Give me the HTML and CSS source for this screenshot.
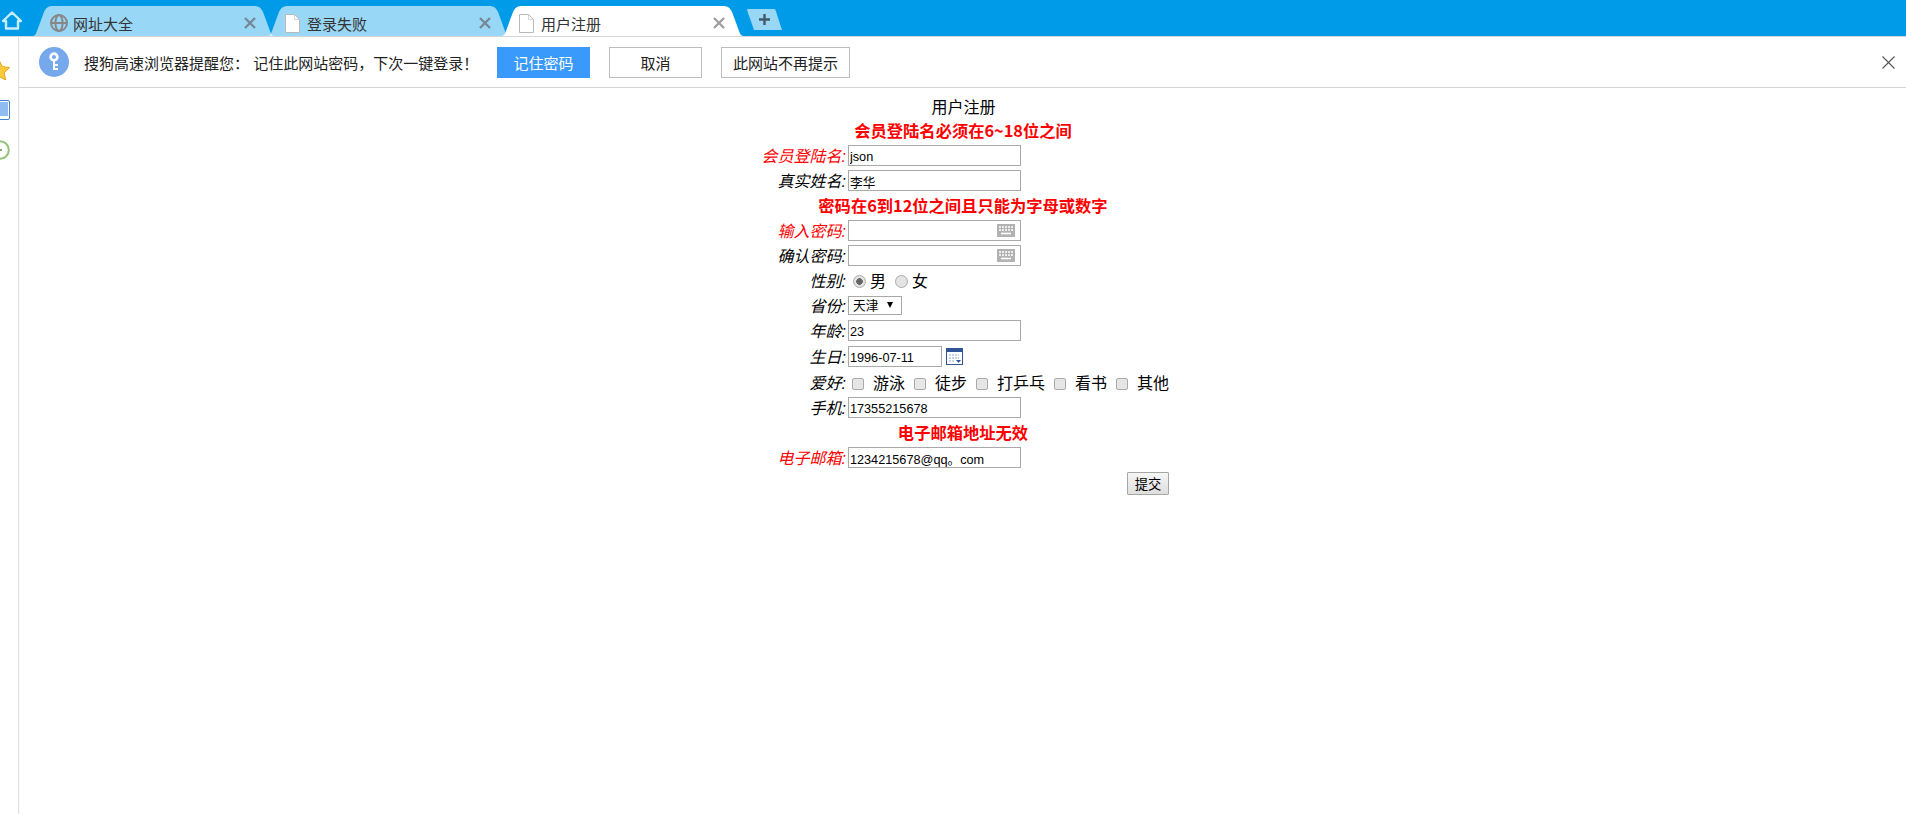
FILE: index.html
```html
<!DOCTYPE html>
<html lang="zh-CN">
<head>
  <meta charset="UTF-8" />
  <title>用户注册</title>
  <link rel="stylesheet" href="styles.css">
</head>
<body>

  <header class="tabbar">
    <div class="home">
      <svg width="20" height="19" viewBox="0 0 20 19"><path d="M1 10 L10 1.5 L19 10 H16 V17.5 H4 V10 Z" fill="none" stroke="#c8eeff" stroke-width="2.4" stroke-linejoin="round"/></svg>
    </div>

    <div class="tab">
      <svg class="tab-shape" width="243" height="30" viewBox="0 0 243 30"><path d="M0 30 C3 30 4 28 5 25 L12 6 C14 2 16 0 21 0 H222 C227 0 229 2 231 6 L238 25 C239 28 240 30 243 30 Z"/></svg>
      <svg class="tab-icon" width="20" height="20" viewBox="0 0 20 20"><g fill="none" stroke="#878787" stroke-width="2"><circle cx="10" cy="10" r="8"/><ellipse cx="10" cy="10" rx="3.6" ry="8"/><path d="M2 10 H18"/></g></svg>
      <span class="tab-title">网址大全</span>
      <svg class="tab-close" width="12" height="12" viewBox="0 0 12 12"><path d="M1 1 L11 11 M11 1 L1 11"/></svg>
    </div>

    <div class="tab">
      <svg class="tab-shape" width="243" height="30" viewBox="0 0 243 30"><path d="M0 30 C3 30 4 28 5 25 L12 6 C14 2 16 0 21 0 H222 C227 0 229 2 231 6 L238 25 C239 28 240 30 243 30 Z"/></svg>
      <svg class="tab-icon doc" width="15" height="19" viewBox="0 0 15 19"><path d="M0.5 0.5 H9.5 L14.5 5.5 V18.5 H0.5 Z" fill="#fff" stroke="#b9b9b9"/><path d="M9.5 0.5 V5.5 H14.5" fill="none" stroke="#d5d5d5"/></svg>
      <span class="tab-title">登录失败</span>
      <svg class="tab-close" width="12" height="12" viewBox="0 0 12 12"><path d="M1 1 L11 11 M11 1 L1 11"/></svg>
    </div>

    <div class="tab active">
      <svg class="tab-shape" width="243" height="30" viewBox="0 0 243 30"><path d="M0 30 C3 30 4 28 5 25 L12 6 C14 2 16 0 21 0 H222 C227 0 229 2 231 6 L238 25 C239 28 240 30 243 30 Z"/></svg>
      <svg class="tab-icon doc" width="15" height="19" viewBox="0 0 15 19"><path d="M0.5 0.5 H9.5 L14.5 5.5 V18.5 H0.5 Z" fill="#fff" stroke="#b9b9b9"/><path d="M9.5 0.5 V5.5 H14.5" fill="none" stroke="#d5d5d5"/></svg>
      <span class="tab-title">用户注册</span>
      <svg class="tab-close" width="12" height="12" viewBox="0 0 12 12"><path d="M1 1 L11 11 M11 1 L1 11"/></svg>
    </div>

    <svg class="new-tab" width="35" height="21" viewBox="0 0 35 21">
      <path d="M0 1 Q0 0 1 0 H27 Q28 0 28.5 1 L35 21 H7 Z" fill="#fff" fill-opacity="0.6"/>
      <path d="M12 10.5 H23 M17.5 5 V16" stroke="#46586a" stroke-width="2.4"/>
    </svg>
  </header>

  <div class="window">
    <aside class="sidebar">
      <svg width="22" height="20" viewBox="0 0 22 20"><path d="M11 0 L14.2 6.6 L21.6 7.6 L16.2 12.6 L17.6 20 L11 16.4 L4.4 20 L5.8 12.6 L0.4 7.6 L7.8 6.6 Z" fill="#fbc93a" stroke="#e7a51d"/></svg>
      <svg width="20" height="20" viewBox="0 0 20 20"><rect x="0.5" y="0.5" width="19" height="19" rx="1.5" fill="#fff" stroke="#3f83d8"/><rect x="2" y="2" width="16" height="14" fill="#8fbdf0"/></svg>
      <svg width="20" height="20" viewBox="0 0 20 20"><circle cx="10" cy="10" r="8.8" fill="#fff" stroke="#93c477" stroke-width="2"/><path d="M8 10 H12" stroke="#55913a" stroke-width="1.5"/></svg>
    </aside>

    <main class="main">
      <div class="infobar">
        <svg class="key" width="30" height="30" viewBox="0 0 30 30">
          <circle cx="15" cy="15" r="15" fill="#75a9ec"/>
          <circle cx="15" cy="10" r="3.4" fill="none" stroke="#fff" stroke-width="2.6"/>
          <path d="M15 13 V23 M15 18 H19 M15 22 H19" fill="none" stroke="#fff" stroke-width="2"/>
        </svg>
        <span class="info-text">搜狗高速浏览器提醒您： 记住此网站密码，下次一键登录！</span>
        <button class="info-btn primary" type="button">记住密码</button>
        <button class="info-btn" type="button">取消</button>
        <button class="info-btn wide" type="button">此网站不再提示</button>
        <svg class="info-close" width="13" height="13" viewBox="0 0 13 13"><path d="M0.5 0.5 L12.5 12.5 M12.5 0.5 L0.5 12.5" stroke="#555" stroke-width="1.1"/></svg>
      </div>

      <form class="reg-form">
        <table class="reg-table">
          <tr class="title-row"><td colspan="2">用户注册</td></tr>
          <tr><td colspan="2" class="error">会员登陆名必须在6~18位之间</td></tr>
          <tr>
            <td class="label bad">会员登陆名:</td>
            <td class="field"><input class="text" type="text" value="json"></td>
          </tr>
          <tr>
            <td class="label">真实姓名:</td>
            <td class="field"><input class="text" type="text" value="李华"></td>
          </tr>
          <tr><td colspan="2" class="error">密码在6到12位之间且只能为字母或数字</td></tr>
          <tr>
            <td class="label bad">输入密码:</td>
            <td class="field">
              <div class="pwd">
                <input class="text" type="password">
                <svg class="kbd" width="18" height="13" viewBox="0 0 18 13"><rect width="18" height="13" fill="#b2b2b2"/><path d="M2 3 H16 M2 6 H16" stroke="#fff" stroke-width="1.6" stroke-dasharray="2 1"/><path d="M4 9.5 H14" stroke="#fff" stroke-width="1.6"/></svg>
              </div>
            </td>
          </tr>
          <tr>
            <td class="label">确认密码:</td>
            <td class="field">
              <div class="pwd">
                <input class="text" type="password">
                <svg class="kbd" width="18" height="13" viewBox="0 0 18 13"><rect width="18" height="13" fill="#b2b2b2"/><path d="M2 3 H16 M2 6 H16" stroke="#fff" stroke-width="1.6" stroke-dasharray="2 1"/><path d="M4 9.5 H14" stroke="#fff" stroke-width="1.6"/></svg>
              </div>
            </td>
          </tr>
          <tr>
            <td class="label">性别:</td>
            <td class="field">
              <div class="choices gender">
                <label><input class="radio" type="radio" name="sex" checked>男</label>
                <label><input class="radio" type="radio" name="sex">女</label>
              </div>
            </td>
          </tr>
          <tr>
            <td class="label">省份:</td>
            <td class="field">
              <div class="select-box">
                <select class="province"><option>天津</option></select>
              </div>
            </td>
          </tr>
          <tr>
            <td class="label">年龄:</td>
            <td class="field"><input class="text" type="text" value="23"></td>
          </tr>
          <tr class="date-row">
            <td class="label">生日:</td>
            <td class="field">
              <div class="date">
                <input class="text short" type="text" value="1996-07-11">
                <svg width="17" height="17" viewBox="0 0 17 17">
                  <rect x="0.5" y="0.5" width="16" height="16" fill="#fff" stroke="#2f5597"/>
                  <rect width="17" height="4" fill="#2f5597"/>
                  <path d="M3 7 H13 M3 10 H13 M3 13 H9" stroke="#c5d3e6" stroke-width="2" stroke-dasharray="2 1"/>
                  <path d="M10 12 H15 L12.5 15 Z" fill="#2f5597"/>
                </svg>
              </div>
            </td>
          </tr>
          <tr>
            <td class="label">爱好:</td>
            <td class="field">
              <div class="choices hobby">
                <input class="check" type="checkbox"><span>游泳</span>
                <input class="check" type="checkbox"><span>徒步</span>
                <input class="check" type="checkbox"><span>打乒乓</span>
                <input class="check" type="checkbox"><span>看书</span>
                <input class="check" type="checkbox"><span>其他</span>
              </div>
            </td>
          </tr>
          <tr>
            <td class="label">手机:</td>
            <td class="field"><input class="text" type="text" value="17355215678"></td>
          </tr>
          <tr><td colspan="2" class="error">电子邮箱地址无效</td></tr>
          <tr>
            <td class="label bad">电子邮箱:</td>
            <td class="field"><input class="text" type="text" value="1234215678@qq。com"></td>
          </tr>
          <tr class="submit-row">
            <td colspan="2"><button class="submit" type="button">提交</button></td>
          </tr>
        </table>
      </form>
    </main>
  </div>

</body>
</html>
```

FILE: styles.css
```css
* {
  box-sizing: border-box;
}
html, body {
  margin: 0;
  padding: 0;
  height: 100%;
  overflow: hidden;
}
body {
  display: flex;
  flex-direction: column;
  background: #fff;
  color: #000;
  font-family: "Liberation Sans", "Noto Sans CJK SC", sans-serif;
}

/* tab strip */
.tabbar {
  display: flex;
  align-items: flex-end;
  flex: none;
  height: 37px;
  background: #009be8;
  border-bottom: 1px solid #d6d6d6;
}
.home {
  display: flex;
  align-self: flex-start;
  justify-content: center;
  width: 24px;
  margin-right: 8px;
  padding-top: 11px;
  flex: none;
}
.tab {
  position: relative;
  display: flex;
  align-items: center;
  flex: none;
  width: 243px;
  height: 30px;
  margin-right: -8px;
  padding: 4px 19px 0 17px;
  font-size: 15px;
  color: #333;
}
.tab.active {
  margin-left: -1px;
}
.tab-shape {
  position: absolute;
  left: 0;
  top: 0;
  fill: #fff;
  fill-opacity: 0.6;
}
.tab.active .tab-shape {
  fill-opacity: 1;
}
.tab-icon, .tab-title, .tab-close {
  position: relative;
}
.tab-icon {
  flex: none;
  margin-right: 4px;
}
.tab-icon.doc {
  margin-left: 1px;
  margin-right: 7px;
}
.tab-close {
  flex: none;
  margin-left: auto;
  fill: none;
  stroke: #778895;
  stroke-width: 2.4;
}
.tab.active .tab-close {
  stroke: #a0a0a0;
}
.new-tab {
  flex: none;
  margin-left: 11px;
  margin-bottom: 6px;
}

/* left rail + page */
.window {
  display: flex;
  flex: 1;
  min-height: 0;
}
.sidebar {
  display: flex;
  flex-direction: column;
  align-items: flex-end;
  flex: none;
  gap: 20px;
  width: 19px;
  padding: 23px 8px 0 0;
  border-right: 1px solid #dedede;
  overflow: hidden;
}
.sidebar svg {
  flex: none;
}
.main {
  flex: 1;
  min-width: 0;
}

/* password prompt */
.infobar {
  display: flex;
  align-items: center;
  height: 51px;
  padding-left: 20px;
  padding-right: 11px;
  border-bottom: 1px solid #d4d4d4;
  font-size: 15px;
  color: #222;
}
.key {
  flex: none;
  margin-right: 15px;
}
.info-text {
  width: 413px;
  white-space: nowrap;
}
.info-btn {
  width: 93px;
  height: 31px;
  margin-right: 19px;
  padding: 0;
  background: #fff;
  border: 1px solid #bcbcbc;
  border-radius: 0;
  font-family: inherit;
  font-size: 15px;
  color: #222;
}
.info-btn.primary {
  background: #3a9afc;
  border-color: #3a9afc;
  color: #fff;
}
.info-btn.wide {
  width: 129px;
  margin-right: 0;
}
.info-close {
  margin-left: auto;
}

/* registration form */
.reg-form {
  padding-top: 7px;
}
.reg-table {
  margin: 0 auto;
  border-collapse: separate;
  border-spacing: 0;
  font-size: 16px;
}
.reg-table td {
  height: 25px;
  padding: 0;
  line-height: 20px;
  white-space: nowrap;
}
.reg-table .title-row td {
  height: 23px;
  padding: 2px 0 0 2px;
  text-align: center;
}
.reg-table td.error {
  padding: 0 0 1px 1px;
  text-align: center;
  font-family: "Noto Sans CJK SC", sans-serif;
  font-size: 16.3px;
  font-weight: bold;
  color: #f00;
}
.reg-table td.label {
  width: 92px;
  padding: 2px 2px 0 0;
  text-align: right;
  font-style: italic;
}
.reg-table td.label.bad {
  color: #f00;
}
.text {
  display: block;
  width: 173px;
  height: 21px;
  margin: 0;
  padding: 2px 1px 0;
  background: #fff;
  border: 1px solid #a9a9a9;
  border-radius: 0;
  outline: none;
  font-family: "Liberation Sans", "Noto Sans CJK SC", sans-serif;
  font-size: 12.7px;
  color: #000;
}
.text.short {
  width: 94px;
}
.pwd {
  position: relative;
  width: 173px;
}
.kbd {
  position: absolute;
  right: 6px;
  top: 4px;
}
.date {
  display: flex;
  align-items: center;
  gap: 4px;
}
.reg-table .date-row td {
  height: 27px;
}
.choices {
  display: flex;
  align-items: center;
  padding-top: 2px;
}
.gender {
  padding-left: 5px;
  gap: 9px;
}
.gender label {
  display: flex;
  align-items: center;
  gap: 4px;
}
.radio {
  appearance: none;
  flex: none;
  width: 13px;
  height: 13px;
  margin: 0;
  background: #e4e4e4;
  border: 1px solid #ababab;
  border-radius: 50%;
}
.radio:checked {
  background: radial-gradient(circle, #666 0, #666 3px, #e4e4e4 3.6px);
}
.hobby {
  padding-left: 4px;
  gap: 9px;
}
.check {
  appearance: none;
  flex: none;
  width: 12px;
  height: 12px;
  margin: 0;
  background: #e6e6e6;
  border: 1px solid #ababab;
  border-radius: 2px;
}
.select-box {
  position: relative;
  width: 54px;
}
.select-box::after {
  content: "";
  position: absolute;
  right: 9px;
  top: 6px;
  border-left: 3.5px solid transparent;
  border-right: 3.5px solid transparent;
  border-top: 6px solid #000;
}
.province {
  appearance: none;
  display: block;
  width: 54px;
  height: 19px;
  margin: 0;
  padding: 0 0 0 4px;
  background: #fff;
  border: 1px solid #a9a9a9;
  border-radius: 0;
  font-family: inherit;
  font-size: 12.7px;
  color: #000;
}
.reg-table .submit-row td {
  height: 27px;
  text-align: right;
}
.submit {
  width: 42px;
  height: 23px;
  padding: 0;
  background: linear-gradient(#f6f6f6, #dedede);
  border: 1px solid #a6a6a6;
  border-radius: 1px;
  font-family: inherit;
  font-size: 13.33px;
  color: #000;
}
```
